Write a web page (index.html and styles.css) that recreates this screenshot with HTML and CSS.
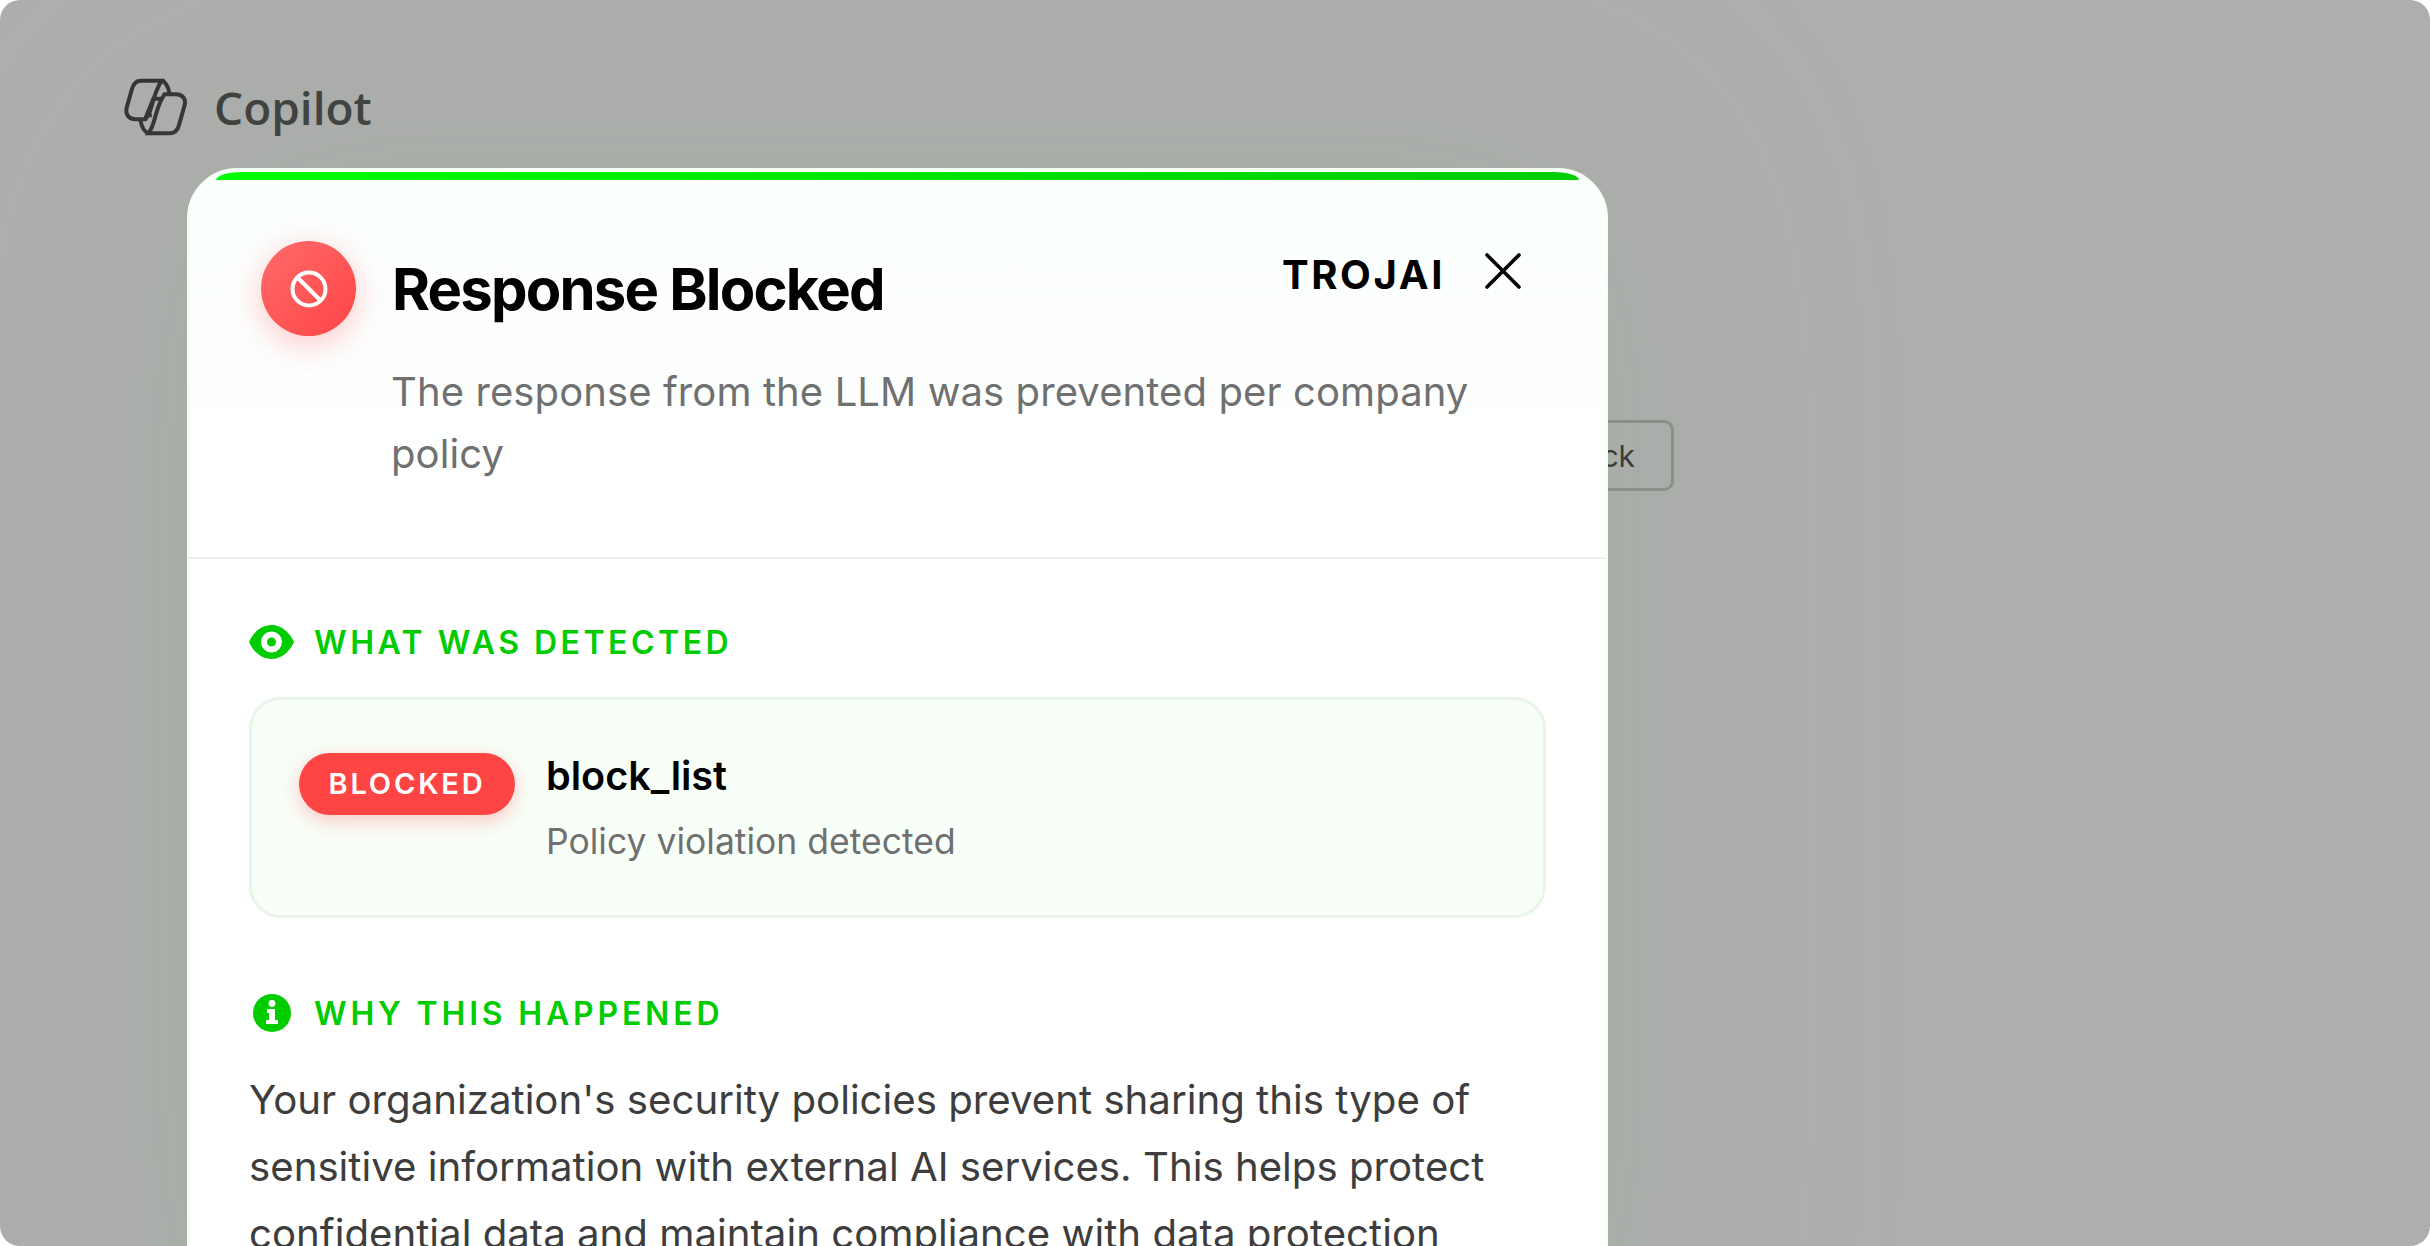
FILE: index.html

```html
<!DOCTYPE html>
<html lang="en">
<head>
    <meta charset="UTF-8">
    <title>Response Blocked</title>
    <link rel="stylesheet" href="styles.css">
</head>
<body>
    <div class="screen">
        <div class="brand">
            <svg class="brand-logo" viewBox="66 78 203 180" fill="none" stroke="#333" stroke-width="12.5">
                <path d="M122 86H186C173 108 165 130 158 156C154 172 150 190 136 206H105C84 206 72 192 78 168L94 112C98 97 108 86 122 86Z"/>
                <path d="M196 128H232C252 128 264 144 258 164L241 224C237 240 226 250 210 250H146C159 232 163 212 168 194C174 172 182 148 196 128Z"/>
                <path d="M186 86C198 88 206 100 212 127"/>
                <path d="M120 207C124 230 130 246 146 250"/>
                <path d="M166 142H186M156 194H140L162 140"/>
            </svg>
            <span class="brand-name">Copilot</span>
        </div>
        <div class="behind-row">
            <button class="ghost-btn">Feedback</button>
        </div>

        <div class="modal">
            <div class="modal-bar"></div>
            <div class="modal-head">
                <div class="head-row">
                    <div class="stop-icon">
                        <svg viewBox="0 0 40 40" width="40" height="40" fill="none" stroke="#fff" stroke-width="4">
                            <circle cx="20" cy="20" r="16.5"/>
                            <path d="M8.5 8.5L31.5 31.5"/>
                        </svg>
                    </div>
                    <h1>Response Blocked</h1>
                    <span class="vendor">TROJAI</span>
                    <svg class="close" viewBox="0 0 36 36" fill="none" stroke="#000" stroke-width="3.6" stroke-linecap="round">
                        <path d="M2 2L34 34M34 2L2 34"/>
                    </svg>
                </div>
                <p class="subtitle">The response from the LLM was prevented per company policy</p>
            </div>
            <div class="modal-body">
                <h2 class="section-title">
                    <svg class="eye" viewBox="0 0 45 34">
                        <path fill="#00cc00" fill-rule="evenodd" d="M22.5 0C33 0 41 8 45 17C41 26 33 34 22.5 34C12 34 4 26 0 17C4 8 12 0 22.5 0ZM22.5 6.5A10.5 10.5 0 1 0 22.5 27.5A10.5 10.5 0 1 0 22.5 6.5ZM22.5 12.5A4.5 4.5 0 1 1 22.5 21.5A4.5 4.5 0 1 1 22.5 12.5Z"/>
                    </svg>
                    What was detected
                </h2>
                <div class="detect-card">
                    <span class="badge">BLOCKED</span>
                    <div class="detect-info">
                        <div class="detect-name">block_list</div>
                        <div class="detect-desc">Policy violation detected</div>
                    </div>
                </div>
                <h2 class="section-title why">
                    <svg class="info" viewBox="0 0 38 38">
                        <circle cx="19" cy="19" r="19" fill="#00cc00"/>
                        <circle cx="19" cy="9.5" r="3.4" fill="#fff"/>
                        <path fill="#fff" d="M14 15H22V26H25V30H13V26H16V19H14Z"/>
                    </svg>
                    Why this happened
                </h2>
                <p class="explain">Your organization's security policies prevent sharing this type of sensitive information with external AI services. This helps protect confidential data and maintain compliance with data protection regulations.</p>
            </div>
        </div>
    </div>
</body>
</html>
```

FILE: styles.css

```css
* {
    box-sizing: border-box;
}
html, body {
    margin: 0;
    height: 100%;
    background: #fff;
}
body {
    font-family: Inter, "Liberation Sans", sans-serif;
    overflow: hidden;
}
.screen {
    position: relative;
    height: 1246px;
    overflow: hidden;
    border-radius: 20px;
    background: #aeaeae;
    padding: 78px 0 0 123px;
}
.brand {
    display: flex;
    align-items: center;
    gap: 26px;
    height: 58px;
}
.brand-logo {
    width: 65px;
    height: 58px;
}
.brand-name {
    font-family: "Open Sans", sans-serif;
    font-size: 46px;
    font-weight: 600;
    color: #3d3d3d;
}
.behind-row {
    display: flex;
    justify-content: flex-end;
    width: 1551px;
    margin-top: 284px;
}
.ghost-btn {
    height: 71px;
    padding: 0 36px;
    border: 3px solid #8c8f8b;
    border-radius: 10px;
    background: transparent;
    font-family: Inter, sans-serif;
    font-size: 30px;
    color: #333;
}
.modal {
    position: absolute;
    left: 187px;
    top: 168px;
    width: 1421px;
    height: 1200px;
    overflow: hidden;
    border: 2px solid #f0fff0;
    border-radius: 50px;
    background: #fff;
    box-shadow: 0 0 260px 60px rgba(130, 170, 120, 0.14);
}
.modal-bar {
    height: 8px;
    margin: 2px 27px 0;
    border-radius: 27px 27px 0 0 / 8px 8px 0 0;
    background: linear-gradient(90deg, #00ff00, #00cc00);
}
.modal-head {
    height: 379px;
    padding: 61px 72px 0 72px;
    border-bottom: 2px solid #eee;
    background: linear-gradient(180deg, #fbfffe, #fff);
}
.head-row {
    display: flex;
    align-items: flex-start;
    height: 95px;
}
.stop-icon {
    display: flex;
    align-items: center;
    justify-content: center;
    flex: none;
    width: 95px;
    height: 95px;
    border-radius: 50%;
    background: linear-gradient(135deg, #ff6b6b, #ff4444);
    box-shadow: 0 8px 32px rgba(255, 68, 68, 0.3);
}
h1 {
    flex: 1;
    margin: 14px 0 0 36px;
    font-size: 58px;
    line-height: 68px;
    font-weight: 700;
    letter-spacing: -1.8px;
    color: #000;
}
.vendor {
    margin: 10px 40px 0 0;
    font-size: 40px;
    line-height: 48px;
    font-weight: 700;
    letter-spacing: 2.6px;
    color: #000;
}
.close {
    width: 36px;
    height: 36px;
    margin: 12px 13px 0 0;
}
.subtitle {
    margin: 25px 40px 0 130px;
    font-size: 40px;
    line-height: 62px;
    letter-spacing: 0.1px;
    color: #707070;
}
.modal-body {
    padding: 66px 60px 0 60px;
}
.section-title {
    display: flex;
    align-items: center;
    gap: 20px;
    margin: 0;
    height: 34px;
    font-size: 32px;
    font-weight: 600;
    letter-spacing: 3.5px;
    text-transform: uppercase;
    color: #00cc00;
}
.eye {
    width: 45px;
    height: 34px;
}
.info {
    width: 38px;
    height: 38px;
    margin-left: 4px;
    margin-right: 3px;
}
.why {
    letter-spacing: 3.8px;
    margin-top: 78px;
}
.detect-card {
    display: flex;
    align-items: flex-start;
    gap: 31px;
    height: 221px;
    margin-top: 38px;
    padding: 53px 47px;
    border: 3px solid #e8f5e8;
    border-radius: 32px;
    background: #f8fff8;
}
.badge {
    flex: none;
    width: 216px;
    height: 62px;
    border-radius: 31px;
    background: #ff4444;
    box-shadow: 0 6px 20px rgba(255, 68, 68, 0.3);
    font-size: 29px;
    line-height: 62px;
    font-weight: 600;
    letter-spacing: 2.8px;
    text-align: center;
    color: #fff;
}
.detect-name {
    margin-top: -2px;
    font-size: 39.6px;
    line-height: 50px;
    font-weight: 600;
    color: #000;
}
.detect-desc {
    margin-top: 16px;
    font-size: 35.5px;
    line-height: 50px;
    color: #707070;
}
.explain {
    margin: 36px 0 0;
    font-size: 40.2px;
    line-height: 67px;
    color: #3d3d3d;
}
```
